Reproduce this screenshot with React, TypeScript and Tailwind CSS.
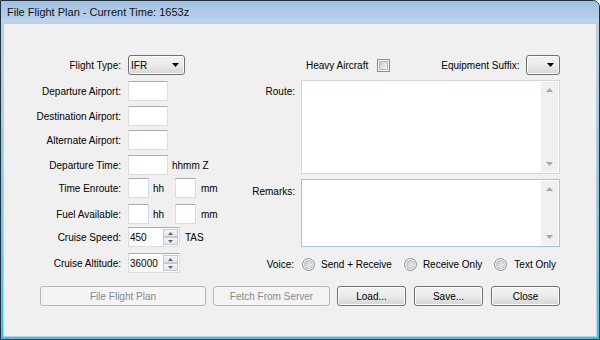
import React from "react";

const font = "font-['Liberation_Sans',Arial,sans-serif]";

function TextBox({ w }: { w: string }) {
  return <div className={`${w} h-[20px] bg-white border border-[#d9dde3] border-t-[#abadb3]`} />;
}

function Arrow({ color = "#000", up = false, w = 7, h = 4 }: { color?: string; up?: boolean; w?: number; h?: number }) {
  return (
    <svg width={w} height={h} viewBox={`0 0 ${w} ${h}`}>
      <path d={up ? `M0 ${h}H${w}L${w / 2} 0Z` : `M0 0H${w}L${w / 2} ${h}Z`} fill={color} />
    </svg>
  );
}

function Combo({ w, value }: { w: string; value?: string }) {
  return (
    <div className={`${w} h-[20px] rounded-[3px] border border-[#707070] bg-gradient-to-b from-[#f3f3f3] via-[#ebebeb] to-[#d6d6d6] flex items-center justify-between pl-[2px] pr-[5px] shadow-[inset_0_0_0_1px_#fcfcfc]`}>
      <span className="text-[10px] text-black">{value}</span>
      <Arrow />
    </div>
  );
}

function Spinner({ value }: { value: string }) {
  return (
    <div className="w-[52px] h-[20px] bg-white border border-[#d9dde3] border-t-[#abadb3] flex items-center justify-between pl-[1px] pr-[1px]">
      <span className="text-[10px] text-black">{value}</span>
      <div className="flex flex-col w-[15px]">
        <div className="h-[8px] border border-[#c6cbd2] bg-gradient-to-b from-[#f7f7f7] to-[#e4e4e4] flex items-center justify-center">
          <Arrow up color="#55657e" w={5} h={3} />
        </div>
        <div className="h-[8px] border border-[#c6cbd2] bg-gradient-to-b from-[#f7f7f7] to-[#e4e4e4] flex items-center justify-center">
          <Arrow color="#55657e" w={5} h={3} />
        </div>
      </div>
    </div>
  );
}

function TextArea({ h, border }: { h: string; border: string }) {
  return (
    <div className={`w-[259px] ${h} bg-white border ${border} flex justify-end p-[1px]`}>
      <div className="w-[17px] h-full bg-[#f0f0f0] flex flex-col items-center justify-between py-[6px]">
        <Arrow up color="#a8a8a8" w={7} h={4} />
        <Arrow color="#a8a8a8" w={7} h={4} />
      </div>
    </div>
  );
}

function Radio() {
  return (
    <div className="w-[13px] h-[13px] rounded-full border border-[#8e8f8f] bg-[#f4f4f4] flex items-center justify-center">
      <div className="w-[9px] h-[9px] rounded-full bg-gradient-to-br from-[#c9c9c9] to-[#f4f4f4] border border-[#b4b8be]" />
    </div>
  );
}

function Button({ w, label, disabled }: { w: string; label: string; disabled?: boolean }) {
  return disabled ? (
    <div className={`${w} h-[20px] rounded-[3px] border border-[#b5b5b5] bg-[#f4f4f4] flex items-center justify-center text-[10px] text-[#8a8a8a]`}>
      {label}
    </div>
  ) : (
    <div className={`${w} h-[20px] rounded-[3px] border border-[#707070] bg-gradient-to-b from-[#f3f3f3] via-[#ebebeb] to-[#d4d4d4] shadow-[inset_0_0_0_1px_#fcfcfc] flex items-center justify-center text-[10px] text-black`}>
      {label}
    </div>
  );
}

function Row({ label, mt, children }: { label: string; mt: string; children: React.ReactNode }) {
  return (
    <div className={`flex items-center h-[20px] ${mt}`}>
      <div className="w-[117px] text-right text-[10px] text-black">{label}</div>
      <div className="ml-[7px] flex items-center">{children}</div>
    </div>
  );
}

export default function App() {
  return (
    <div className={`w-[600px] h-[340px] flex flex-col border border-[#24323f] rounded-tr-[7px] overflow-hidden bg-[#b0cbe7] ${font}`}>
      <div className="h-[22px] flex items-center pl-[6px] bg-gradient-to-b from-[#a3c1e2] to-[#bcd4ee] text-[11px] text-[#111]">
        File Flight Plan - Current Time: 1653z
      </div>
      <div className="flex-1 flex flex-col px-[2px] pb-[2px] bg-gradient-to-b from-[#b9d2ec] via-[#7ccbec] to-[#2ec6ef]">
        <div className="flex-1 flex flex-col bg-[#f0f0f0] border border-[#c4ccd5] pt-[31px]">
          <div className="flex">
            <div className="w-[246px] flex flex-col">
              <Row label="Flight Type:" mt="mt-0">
                <Combo w="w-[57px]" value="IFR" />
              </Row>
              <Row label="Departure Airport:" mt="mt-[6px]">
                <TextBox w="w-[40px]" />
              </Row>
              <Row label="Destination Airport:" mt="mt-[5px]">
                <TextBox w="w-[40px]" />
              </Row>
              <Row label="Alternate Airport:" mt="mt-[4px]">
                <TextBox w="w-[40px]" />
              </Row>
              <Row label="Departure Time:" mt="mt-[5px]">
                <TextBox w="w-[40px]" />
                <span className="ml-[4px] text-[10px] text-black">hhmm Z</span>
              </Row>
              <Row label="Time Enroute:" mt="mt-[3px]">
                <TextBox w="w-[21px]" />
                <span className="ml-[4px] w-[22px] text-[10px] text-black">hh</span>
                <TextBox w="w-[21px]" />
                <span className="ml-[5px] text-[10px] text-black">mm</span>
              </Row>
              <Row label="Fuel Available:" mt="mt-[6px]">
                <TextBox w="w-[21px]" />
                <span className="ml-[4px] w-[22px] text-[10px] text-black">hh</span>
                <TextBox w="w-[21px]" />
                <span className="ml-[5px] text-[10px] text-black">mm</span>
              </Row>
              <Row label="Cruise Speed:" mt="mt-[3px]">
                <Spinner value="450" />
                <span className="ml-[5px] text-[10px] text-black">TAS</span>
              </Row>
              <Row label="Cruise Altitude:" mt="mt-[6px]">
                <Spinner value="36000" />
              </Row>
            </div>

            <div className="flex flex-col">
              <div className="flex items-center h-[20px] text-[10px] text-black">
                <span className="ml-[56px]">Heavy Aircraft</span>
                <div className="ml-[9px] w-[13px] h-[13px] border border-[#8e8f8f] bg-[#f4f4f4] p-[1px]">
                  <div className="w-full h-full border border-[#b4b8be] bg-gradient-to-br from-[#cdcdcd] to-[#f3f3f3]" />
                </div>
                <span className="ml-[51px]">Equipment Suffix:</span>
                <div className="ml-[7px]">
                  <Combo w="w-[34px]" />
                </div>
              </div>
              <div className="flex mt-[5px]">
                <div className="w-[45px] text-right text-[10px] text-black pt-[4px]">Route:</div>
                <div className="ml-[6px]">
                  <TextArea h="h-[94px]" border="border-[#d3d7de]" />
                </div>
              </div>
              <div className="flex mt-[5px]">
                <div className="w-[45px] text-right text-[10px] text-black pt-[5px]">Remarks:</div>
                <div className="ml-[6px]">
                  <TextArea h="h-[68px]" border="border-[#a3c4e6]" />
                </div>
              </div>
              <div className="flex items-center h-[20px] mt-[7px] text-[10px] text-black">
                <div className="w-[44px] text-right">Voice:</div>
                <div className="ml-[8px]"><Radio /></div>
                <span className="ml-[6px]">Send + Receive</span>
                <div className="ml-[12px]"><Radio /></div>
                <span className="ml-[6px]">Receive Only</span>
                <div className="ml-[12px]"><Radio /></div>
                <span className="ml-[7px]">Text Only</span>
              </div>
            </div>
          </div>

          <div className="flex mt-[12px] ml-[36px]">
            <Button w="w-[166px]" label="File Flight Plan" disabled />
            <div className="ml-[7px]"><Button w="w-[117px]" label="Fetch From Server" disabled /></div>
            <div className="ml-[7px]"><Button w="w-[69px]" label="Load..." /></div>
            <div className="ml-[8px]"><Button w="w-[69px]" label="Save..." /></div>
            <div className="ml-[8px]"><Button w="w-[69px]" label="Close" /></div>
          </div>
        </div>
      </div>
    </div>
  );
}
